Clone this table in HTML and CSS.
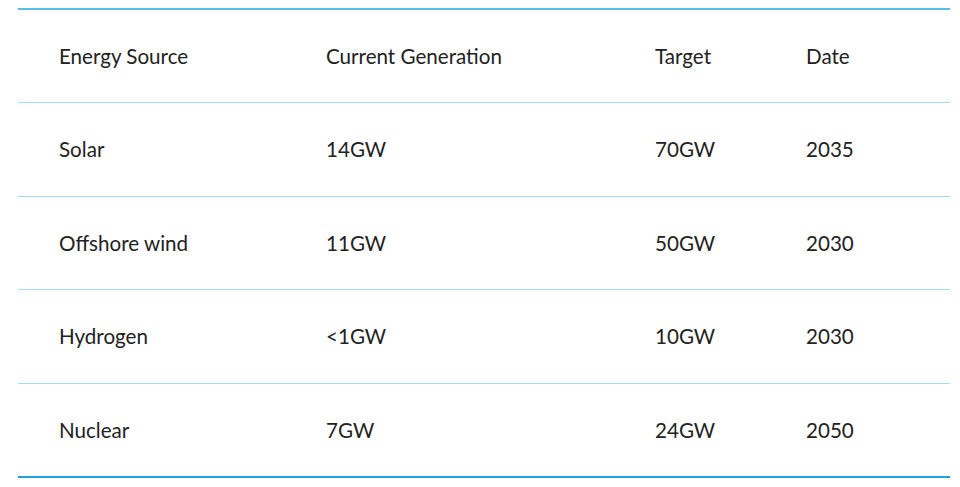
FILE: index.html
```html
<!DOCTYPE html>
<html lang="en">
<head>
<meta charset="utf-8">
<title>Energy targets</title>
<link rel="stylesheet" href="styles.css">
</head>
<body>
<div class="wrap">
  <div class="table">
    <div class="row head">
      <div class="cell">Energy Source</div>
      <div class="cell">Current Generation</div>
      <div class="cell">Target</div>
      <div class="cell">Date</div>
    </div>
    <div class="row tall">
      <div class="cell">Solar</div>
      <div class="cell">14GW</div>
      <div class="cell">70GW</div>
      <div class="cell">2035</div>
    </div>
    <div class="row">
      <div class="cell">Offshore wind</div>
      <div class="cell">11GW</div>
      <div class="cell">50GW</div>
      <div class="cell">2030</div>
    </div>
    <div class="row tall">
      <div class="cell">Hydrogen</div>
      <div class="cell">&lt;1GW</div>
      <div class="cell">10GW</div>
      <div class="cell">2030</div>
    </div>
    <div class="row last">
      <div class="cell">Nuclear</div>
      <div class="cell">7GW</div>
      <div class="cell">24GW</div>
      <div class="cell">2050</div>
    </div>
  </div>
</div>
</body>
</html>
```
FILE: styles.css
```css
html, body {
  margin: 0;
  padding: 0;
  background: #ffffff;
}
body {
  font-family: Lato, "Open Sans", sans-serif;
  color: #222222;
}
.wrap {
  padding: 8px 10px 0 18px;
}
.table {
  width: 932px;
  border-top: 2px solid #56bde9;
}
.row {
  display: grid;
  grid-template-columns: 267px 329px 151px 185px;
  align-items: center;
  height: 92px;
  border-bottom: 1px solid #a6dcf2;
}
.row.tall {
  height: 93px;
}
.row.last {
  border-bottom: 2px solid #1fa2de;
}
.cell {
  padding-left: 41px;
  font-size: 20.6px;
  line-height: 24px;
  padding-bottom: 1px;
}
```
